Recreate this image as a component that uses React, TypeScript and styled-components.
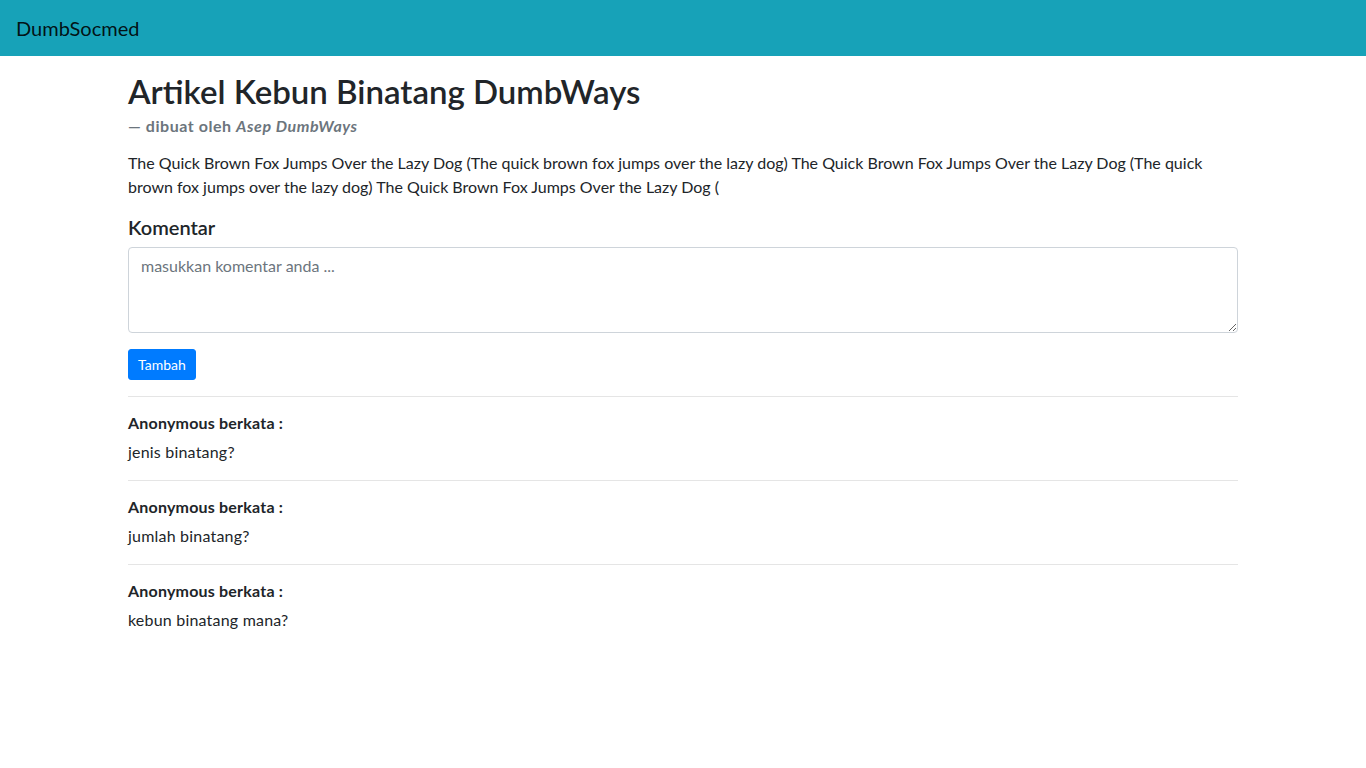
import React from "react";
import styled, { createGlobalStyle } from "styled-components";

const Global = createGlobalStyle`
  * { box-sizing: border-box; }
  body {
    margin: 0;
    font-family: Lato, "Open Sans", sans-serif;
    font-size: 16px;
    line-height: 1.5;
    color: #212529;
    background: #fff;
  }
`;

const Navbar = styled.nav`
  height: 56px;
  background: #17a2b8;
  display: flex;
  align-items: center;
  padding: 0 16px;
`;

const Brand = styled.span`
  font-size: 20px;
  color: rgba(0, 0, 0, 0.9);
`;

const Container = styled.main`
  max-width: 1140px;
  margin: 0 auto;
  padding: 16px 15px 0;
`;

const Title = styled.h2`
  margin: 0 0 5px;
  font-size: 33px;
  font-weight: 600;
  line-height: 38px;
`;

const Byline = styled.div`
  font-size: 16px;
  line-height: 22px;
  font-weight: 700;
  letter-spacing: 0.55px;
  color: #6c757d;
  margin-bottom: 14px;
`;

const Body = styled.p`
  margin: 0 0 16px;
`;

const SectionTitle = styled.h5`
  margin: 0 0 8px;
  font-size: 20px;
  font-weight: 600;
  line-height: 1.2;
`;

const TextArea = styled.textarea`
  display: block;
  width: 100%;
  height: 86px;
  padding: 6px 12px;
  font: inherit;
  color: #495057;
  border: 1px solid #ced4da;
  border-radius: 4px;
  resize: vertical;
  &::placeholder { color: #6c757d; }
`;

const Button = styled.button`
  margin-top: 16px;
  height: 31px;
  padding: 0 9px;
  font-family: inherit;
  font-size: 14px;
  color: #fff;
  background: #007bff;
  border: 1px solid #007bff;
  border-radius: 3px;
`;

const Rule = styled.hr`
  margin: 16px 0;
  border: 0;
  border-top: 1px solid rgba(0, 0, 0, 0.1);
`;

const Author = styled.h6`
  margin: 0 0 8px;
  font-size: 16px;
  font-weight: 700;
  letter-spacing: 0.2px;
  line-height: 19px;
`;

const CommentText = styled.p`
  margin: 0;
  letter-spacing: 0.2px;
`;

const comments = ["jenis binatang?", "jumlah binatang?", "kebun binatang mana?"];

export default function App() {
  return (
    <>
      <Global />
      <Navbar>
        <Brand>DumbSocmed</Brand>
      </Navbar>
      <Container>
        <Title>Artikel Kebun Binatang DumbWays</Title>
        <Byline>
          — dibuat oleh <i>Asep DumbWays</i>
        </Byline>
        <Body>
          The Quick Brown Fox Jumps Over the Lazy Dog (The quick brown fox jumps over the lazy dog) The Quick Brown Fox
          Jumps Over the Lazy Dog (The quick brown fox jumps over the lazy dog) The Quick Brown Fox Jumps Over the Lazy
          Dog (
        </Body>
        <SectionTitle>Komentar</SectionTitle>
        <TextArea placeholder="masukkan komentar anda ..." />
        <Button>Tambah</Button>
        {comments.map((c, i) => (
          <React.Fragment key={i}>
            <Rule />
            <Author>Anonymous berkata :</Author>
            <CommentText>{c}</CommentText>
          </React.Fragment>
        ))}
      </Container>
    </>
  );
}
